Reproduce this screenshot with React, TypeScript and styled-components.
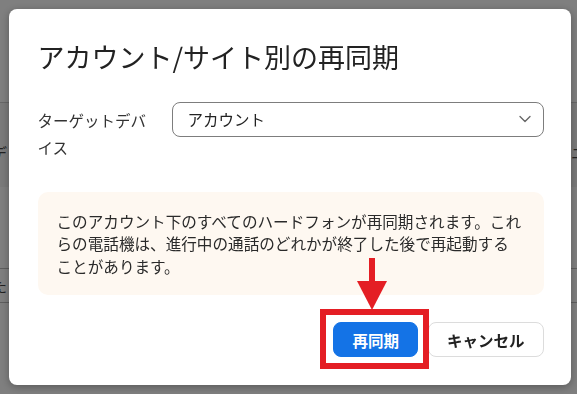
import styled, { createGlobalStyle } from "styled-components";
import { ChevronDown } from "lucide-react";

const GlobalStyle = createGlobalStyle`
  html, body, #root {
    height: 100%;
  }
  body {
    margin: 0;
    font-family: "Noto Sans CJK JP", "Noto Sans", sans-serif;
    color: #222;
    overflow: hidden;
  }
  * {
    box-sizing: border-box;
  }
`;

// Page behind the dialog (only its edges show)
const Page = styled.div`
  height: 100%;
  background: #ffffff;
  overflow: hidden;
`;

const PageHeader = styled.div`
  height: 103px;
  border-bottom: 1px solid #cfcfcf;
`;

const PageBand = styled.div`
  height: 84px;
  background: #f4f4f4;
  display: flex;
  justify-content: space-between;
  align-items: center;
  padding-top: 14px;
  font-size: 15px;
  color: #444;
`;

const PageBlock = styled.div`
  height: 82px;
  border-bottom: 1px solid #bdbdbd;
`;

const PageRow = styled.div`
  height: 34px;
  border-bottom: 1px solid #bdbdbd;
  display: flex;
  align-items: center;
  font-size: 15px;
  color: #444;
`;

const PeekText = styled.span<{ $side: "left" | "right" }>`
  margin-left: ${({ $side }) => ($side === "left" ? "-8px" : "0")};
  margin-right: ${({ $side }) => ($side === "right" ? "-9px" : "0")};
`;

// Dialog
const Overlay = styled.div`
  position: fixed;
  inset: 0;
  background: rgba(0, 0, 0, 0.5);
  display: flex;
  align-items: center;
  justify-content: center;
  padding-left: 2px;
`;

const Dialog = styled.div`
  width: 562px;
  background: #ffffff;
  border-radius: 8px;
  box-shadow: 0 2px 8px rgba(0, 0, 0, 0.3);
  padding: 30px 27px 28px 29px;
  display: flex;
  flex-direction: column;
`;

const Title = styled.h2`
  margin: 0;
  font-size: 27px;
  font-weight: 400;
  line-height: 35px;
  color: #222;
`;

const FieldRow = styled.div`
  margin-top: 28px;
  display: grid;
  grid-template-columns: 118px 1fr;
  column-gap: 16px;
  align-items: start;
`;

const FieldLabel = styled.label`
  padding-top: 5px;
  font-size: 15.5px;
  line-height: 27px;
  color: #333;
`;

const SelectBox = styled.div`
  height: 35px;
  border: 1px solid #7d7d7d;
  border-radius: 8px;
  display: flex;
  align-items: center;
  justify-content: space-between;
  padding: 0 8px 0 15px;
  font-size: 15.5px;
  color: #222;
`;

const Notice = styled.div`
  margin-top: 31px;
  background: #fef8f1;
  border-radius: 10px;
  padding: 18px 17px 18px 19px;
  font-size: 15.6px;
  line-height: 22.4px;
  color: #2a2a2a;
`;

const Footer = styled.div`
  margin-top: 27px;
  display: flex;
  justify-content: flex-end;
  gap: 10px;
`;

const Button = styled.button<{ $primary?: boolean }>`
  height: 35px;
  padding: 0 18px;
  border-radius: 8px;
  font-family: inherit;
  font-size: 15.5px;
  font-weight: 700;
  cursor: pointer;
  border: 1px solid ${({ $primary }) => ($primary ? "#1473e6" : "#dcdcdc")};
  background: ${({ $primary }) => ($primary ? "#1473e6" : "#ffffff")};
  color: ${({ $primary }) => ($primary ? "#ffffff" : "#222")};
`;

// Red annotation around the primary button
const Highlight = styled.div`
  position: relative;
  display: flex;
`;

const RedFrame = styled.div`
  position: absolute;
  top: -13px;
  left: -13px;
  right: -11px;
  bottom: -12px;
  border: 6px solid #e41e24;
  pointer-events: none;
`;

const RedArrow = styled.svg`
  position: absolute;
  left: 24px;
  top: -64px;
  width: 30px;
  height: 52px;
  pointer-events: none;
`;

const App = () => {
  return (
    <>
      <GlobalStyle />
      <Page>
        <PageHeader />
        <PageBand>
          <PeekText $side="left">デ</PeekText>
          <PeekText $side="right">ニ</PeekText>
        </PageBand>
        <PageBlock />
        <PageRow>
          <PeekText $side="left">た</PeekText>
        </PageRow>
      </Page>

      <Overlay>
        <Dialog>
          <Title>アカウント/サイト別の再同期</Title>

          <FieldRow>
            <FieldLabel>ターゲットデバイス</FieldLabel>
            <SelectBox>
              <span>アカウント</span>
              <ChevronDown size={20} color="#666" strokeWidth={1.6} />
            </SelectBox>
          </FieldRow>

          <Notice>
            このアカウント下のすべてのハードフォンが再同期されます。これらの電話機は、進行中の通話のどれかが終了した後で再起動する
            <br />
            ことがあります。
          </Notice>

          <Footer>
            <Highlight>
              <Button $primary>再同期</Button>
              <RedFrame />
              <RedArrow viewBox="0 0 30 52">
                <rect x="12" y="0" width="6" height="24" fill="#e41e24" />
                <polygon points="0,23 30,23 15,52" fill="#e41e24" />
              </RedArrow>
            </Highlight>
            <Button>キャンセル</Button>
          </Footer>
        </Dialog>
      </Overlay>
    </>
  );
};

export default App;
